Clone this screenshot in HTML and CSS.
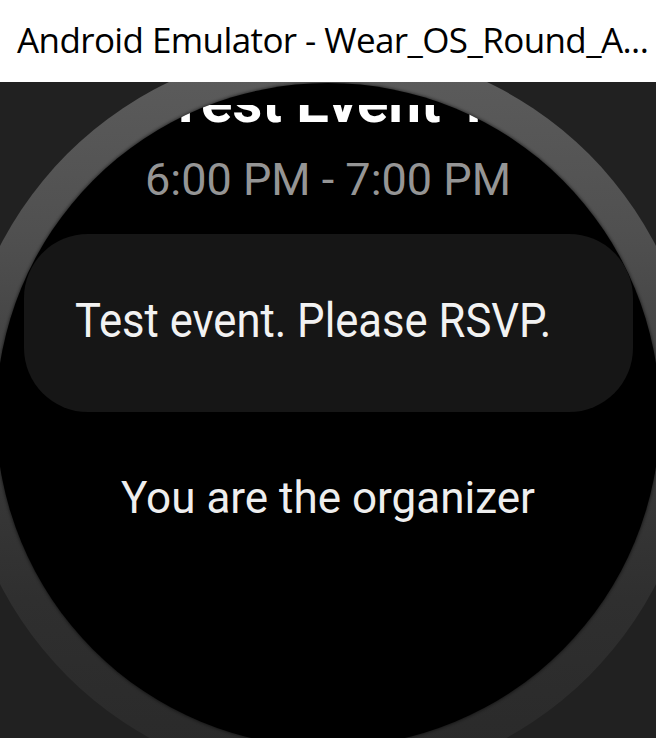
FILE: index.html
```html
<!DOCTYPE html>
<html lang="en">
<head>
<meta charset="utf-8">
<title>Android Emulator - Wear_OS_Round_API</title>
<link rel="stylesheet" href="styles.css">
</head>
<body>
  <header class="titlebar">
    <span class="titlebar-text">Android Emulator - Wear_OS_Round_A...</span>
  </header>
  <main class="stage">
    <div class="bezel">
      <div class="screen">
        <div class="viewport">
          <h1 class="event-title">Test Event 1</h1>
          <p class="event-time">6:00 PM - 7:00 PM</p>
          <div class="card">
            <p class="card-text">Test event. Please RSVP.</p>
          </div>
          <p class="organizer">You are the organizer</p>
        </div>
      </div>
    </div>
  </main>
</body>
</html>
```

FILE: styles.css
```css
* {
  box-sizing: border-box;
}

html, body {
  margin: 0;
  padding: 0;
}

body {
  width: 656px;
  height: 738px;
  overflow: hidden;
  background: #212121;
  font-family: Roboto, "Noto Sans", sans-serif;
}

.titlebar {
  height: 82px;
  background: #ffffff;
  padding: 22px 0 0 17px;
  overflow: hidden;
}

.titlebar-text {
  display: block;
  font-family: "Open Sans", "Noto Sans", sans-serif;
  font-size: 35px;
  letter-spacing: -0.6px;
  line-height: 1;
  color: #000000;
  white-space: nowrap;
}

.stage {
  height: 656px;
  overflow: hidden;
  display: flex;
  justify-content: center;
  align-items: flex-start;
  background: #212121;
}

.bezel {
  flex: 0 0 738px;
  width: 738px;
  height: 738px;
  margin-top: -36px;
  padding: 37px;
  border-radius: 50%;
  background: linear-gradient(to bottom, #5d5d5d 0%, #505050 25%, #3d3d3d 50%, #2f2f2f 75%, #292929 100%);
}

.screen {
  width: 664px;
  height: 664px;
  border-radius: 50%;
  background: #000000;
  overflow: hidden;
  padding-top: 22px;
  box-shadow: 0 0 3px 1px rgba(0, 0, 0, 0.45);
}

.viewport {
  height: 100%;
  overflow: hidden;
  display: flex;
  flex-direction: column;
  align-items: center;
}

.event-title {
  margin: -32px 0 0 0;
  font-size: 58px;
  line-height: 1;
  font-weight: 700;
  color: #ffffff;
  white-space: nowrap;
}

.event-time {
  margin: 26px 0 0 0;
  font-size: 45px;
  line-height: 1;
  color: #959595;
  white-space: nowrap;
}

.card {
  flex: 0 0 auto;
  margin-top: 32px;
  width: 609px;
  height: 178px;
  border-radius: 64px;
  background: #161616;
  display: flex;
  align-items: center;
  padding-left: 51px;
}

.card-text {
  margin: 0 0 6px 0;
  font-size: 49px;
  line-height: 1;
  color: #f2f2f2;
  white-space: nowrap;
  transform: scaleX(0.89);
  transform-origin: left center;
}

.organizer {
  margin: 64px 0 0 0;
  font-size: 44px;
  line-height: 1;
  color: #eeeeee;
  white-space: nowrap;
}
```
